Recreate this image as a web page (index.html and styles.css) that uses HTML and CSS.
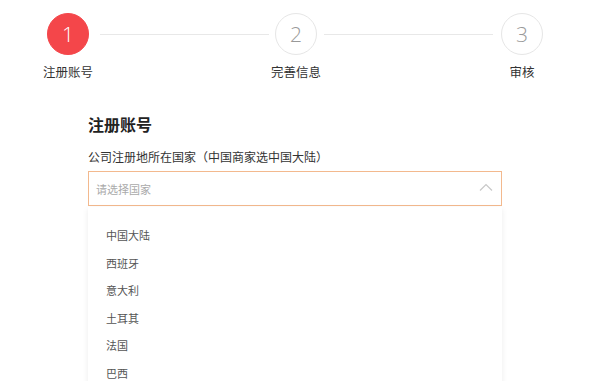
FILE: index.html
```html
<!DOCTYPE html>
<html lang="zh-CN">
<head>
    <meta charset="UTF-8">
    <meta name="viewport" content="width=device-width, initial-scale=1.0">
    <title>注册账号</title>
    <link rel="stylesheet" href="styles.css">
</head>
<body>
    <div class="stepper">
        <div class="step active">
            <div class="circle">1</div>
            <div class="step-label">注册账号</div>
        </div>
        <div class="line line-first"></div>
        <div class="step">
            <div class="circle">2</div>
            <div class="step-label">完善信息</div>
        </div>
        <div class="line line-second"></div>
        <div class="step">
            <div class="circle">3</div>
            <div class="step-label">审核</div>
        </div>
    </div>

    <div class="form">
        <h2 class="form-title">注册账号</h2>
        <div class="field-label">公司注册地所在国家（中国商家选中国大陆）</div>
        <div class="select">
            <div class="select-box">
                <span class="placeholder">请选择国家</span>
                <svg class="chevron" width="14" height="8" viewBox="0 0 14 8">
                    <polyline points="1,7.5 7,1.5 13,7.5" fill="none" stroke="#c8c8c8" stroke-width="1.2"/>
                </svg>
            </div>
            <ul class="options">
                <li>中国大陆</li>
                <li>西班牙</li>
                <li>意大利</li>
                <li>土耳其</li>
                <li>法国</li>
                <li>巴西</li>
            </ul>
        </div>
    </div>
</body>
</html>
```

FILE: styles.css
```css
body {
    margin: 0;
    font-family: "Noto Sans CJK SC", "Noto Sans", sans-serif;
    color: #333;
    background: #fff;
}
.stepper {
    display: flex;
    align-items: flex-start;
    padding: 13px 0 0 47px;
    width: 496px;
}
.step {
    position: relative;
    width: 42px;
    display: flex;
    flex-direction: column;
    align-items: center;
}
.circle {
    width: 40px;
    height: 40px;
    border: 1px solid #e6e6e6;
    border-radius: 50%;
    display: flex;
    align-items: center;
    justify-content: center;
    font-family: "Open Sans", "Noto Sans", sans-serif;
    font-weight: 300;
    font-size: 21px;
    color: #999;
}
.step.active .circle {
    background: #f4464a;
    border-color: #f4464a;
    color: #fff;
}
.step-label {
    margin-top: 8px;
    font-size: 12.5px;
    white-space: nowrap;
    color: #333;
    line-height: 18px;
}
.line {
    flex: 1;
    height: 1px;
    background: #e8e8e8;
    margin-top: 21px;
}
.line-first {
    margin-left: 11px;
    margin-right: 6px;
}
.line-second {
    margin-left: 7px;
    margin-right: 8px;
}
.form {
    padding: 0 0 0 88px;
    width: 414px;
}
.form-title {
    margin: 31px 0 0;
    font-size: 16px;
    font-weight: bold;
    color: #222;
    line-height: 24px;
}
.field-label {
    margin-top: 12px;
    font-size: 12px;
    line-height: 18px;
    color: #333;
}
.select {
    margin-top: 5px;
}
.select-box {
    height: 33px;
    border: 1px solid #f3b98e;
    display: flex;
    align-items: center;
    justify-content: space-between;
    padding: 0 7px 0 7px;
}
.placeholder {
    font-size: 11px;
    color: #aaa;
}
.chevron {
    margin-right: 1px;
    margin-bottom: 3px;
}
.options {
    list-style: none;
    margin: 1px 0 0;
    padding: 15px 0 0 18px;
    box-shadow: 0 2px 6px rgba(0, 0, 0, 0.08);
}
.options li {
    height: 27.6px;
    line-height: 27.6px;
    font-size: 11px;
    color: #555;
}
```
